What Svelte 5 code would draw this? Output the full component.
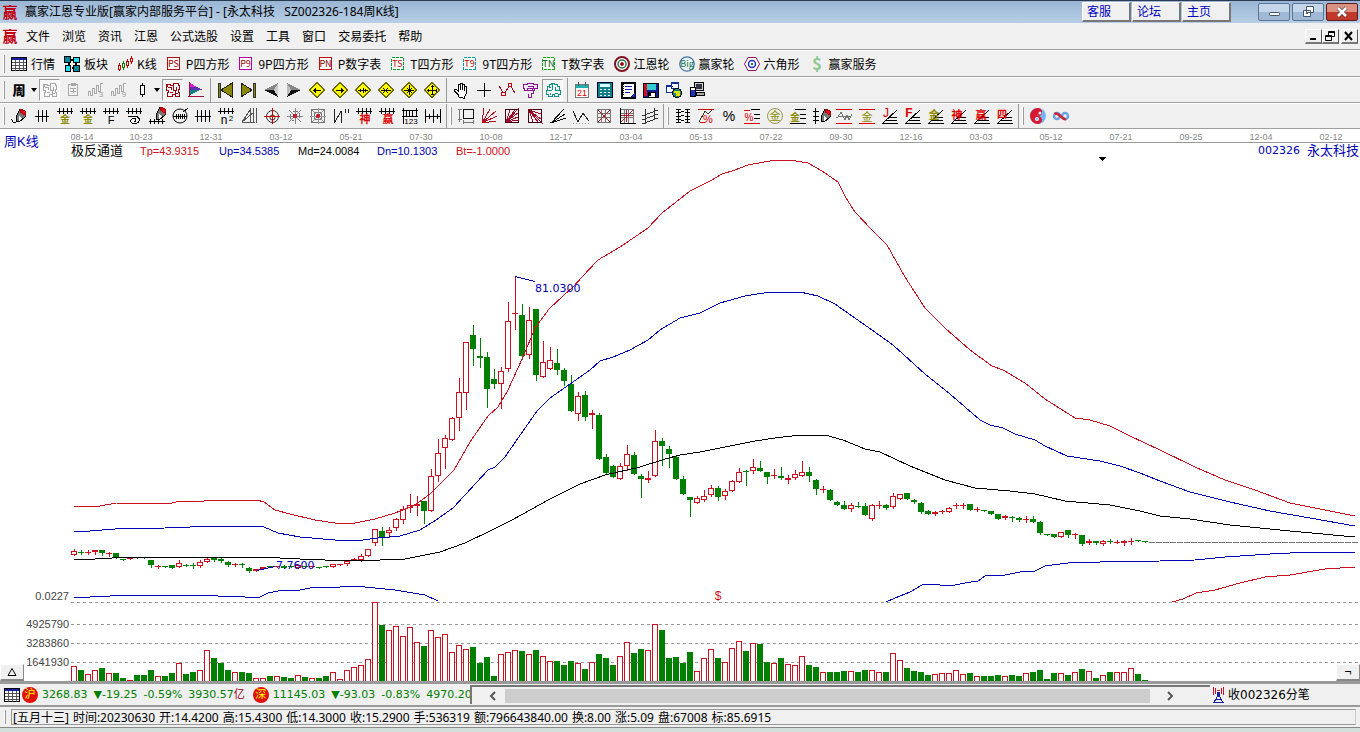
<script>
    const RED = '#cc1020';
    const GREEN = '#007f00';
    const BLUE = '#0000b4';

    const menus = ['文件', '浏览', '资讯', '江恩', '公式选股', '设置', '工具', '窗口', '交易委托', '帮助'];
    const siteLinks = ['客服', '论坛', '主页'];

    // icon helpers
    const t = (x, y, size, color, label, weight = 400) =>
        `<text x="${x}" y="${y}" font-size="${size}" font-weight="${weight}" fill="${color}" stroke="none" text-anchor="middle">${label}</text>`;
    const badge = (frame, color, label) =>
        `<rect x="1.5" y="1.5" width="12" height="12" fill="#fff" stroke="${frame}" ${frame[1] === '0' ? 'stroke-dasharray="3 1"' : ''}/>${t(7.5, 11, 9, color, label)}`;
    const diamond = (d) =>
        `<path d="M8 .5 15.5 8 8 15.5 .5 8Z" fill="#ff0" stroke="#6b6b00"/><path d="${d}" stroke="#000"/>`;
    const comb = '<path d="M0 3.5h16M2.5 0v6M6.5 0v6M10.5 0v6M14.5 0v6" stroke="#000"/>';
    const rays = '<path d="M0 15.5h16M3 12.5h12M6 9.5h9M1 15 15 2" stroke="#000"/>';
    const pen = '<path d="M6 7 9 1l5 2v6l-6 5-3-1z" fill="#777" stroke="#000"/><path d="M9 1l5 2v4l-5-3z" fill="#e01020" stroke="#a00"/><path d="M8 8l3 2-3 3z" fill="#fff" stroke="none"/>';
    const star = 'M0 8h16M8 0v16M2 2l12 12M14 2 2 14';
    const cloud = 'M1.5 2.5h4v1h3v-2h5v2h1v4h-1v3h1v4h-4v-2h-3v2h-5v-4h1v-2h-2v-4h1zM3 5.5h3v2M8.5 4v4h3V5M5 10.5h3M10.5 9v2h2';
    const steps = '<path d="M.5 14V9.5h2v4h2v-7h2v5h2v-8h2v6h2v-8h2" stroke="#a8a8a8"/>';

    const icons = {
        table: '<rect x=".5" y="1.5" width="15" height="13" fill="#fff" stroke="#000"/><path d="M1 3h14" stroke="#1020a0" stroke-width="2"/><path d="M1 6.5h14M1 9.5h14M1 12.5h14M4.5 4v11M8.5 4v11M12.5 4v11" stroke="#555"/>',
        blocks: '<g stroke="#000"><path d="M6 4h4M12 6v4M5 7v4M8 12h3" stroke-width="2"/><rect x=".5" y=".5" width="6" height="6" fill="#089"/><rect x="9.5" y="1.5" width="6" height="5" fill="#2de"/><rect x="1.5" y="9.5" width="5" height="6" fill="#2de"/><rect x="9.5" y="9.5" width="6" height="6" fill="#089"/></g>',
        kline: '<path d="M2.5 7v8M10.5 3v9M14.5 0v8" stroke="#c00"/><path d="M6.5 5v9" stroke="#080"/><g fill="#fff"><rect x="1.5" y="9.5" width="2" height="4" stroke="#c00"/><rect x="5.5" y="7.5" width="2" height="4" stroke="#080"/><rect x="9.5" y="5.5" width="2" height="4" stroke="#c00"/><rect x="13.5" y="2.5" width="2" height="3" stroke="#c00"/></g>',
        ps: badge('#b01010', '#900', 'PS'),
        p9: badge('#b000b0', '#900', 'P9'),
        pn: badge('#c01010', '#700', 'PN'),
        ts: badge('#00a030', '#b00', 'TS'),
        t9: badge('#00a0a0', '#b00', 'T9'),
        tn: badge('#00b000', '#050', 'TN'),
        wheel: '<g shape-rendering="auto"><circle cx="8" cy="8" r="7" fill="#fff" stroke="#801020" stroke-width="2"/><circle cx="8" cy="8" r="4" stroke="#287850" stroke-width="1.5"/><circle cx="8" cy="8" r="1.5" fill="#a01020" stroke="#a01020"/></g>',
        big: `<g shape-rendering="auto"><circle cx="8" cy="8" r="7.2" fill="#e8f4f4" stroke="#4870a0" stroke-width="1.3"/></g>${t(8, 11, 9, '#187850', 'Big')}`,
        hex: '<g shape-rendering="auto"><path d="M4 1.5h8L15.5 8 12 14.5H4L.5 8Z" fill="#fff" stroke="#901060"/><circle cx="8" cy="8" r="3.5" stroke="#2030c0" stroke-width="1.5"/><circle cx="8" cy="8" r="1.2" fill="#187850" stroke="none"/></g>',
        dollar: t(8, 14, 17, '#8cc890', '$', 700),
        week: t(8, 13, 13, '#000', '周', 900),
        cloud: `<path d="${cloud}" stroke="#a8a8a8"/>`,
        clip: '<path d="M3.5 2.5h9v11h-9zM6 1.5h4v2H6zM5 6.5h6M5 9.5h6M8.5 6v5" stroke="#a8a8a8"/>',
        m3: steps + t(13, 15, 8, '#999', '3'),
        m9: steps + t(13, 15, 8, '#999', '9'),
        candle: '<path d="M8.5 1v14" stroke="#000"/><rect x="6.5" y="3.5" width="4" height="9" fill="#fff" stroke="#000"/>',
        redcloud: `<path d="${cloud}" stroke="#a00010"/>`,
        flag: '<path d="M1.5 0v15M0 14.5h16" stroke="#a01040"/><path d="M2 1l7 4H2z" fill="#e020d0" stroke="none"/><path d="M2 5h7l6 3H2z" fill="#6030b0" stroke="none"/><path d="M2 8h10l-10 5z" fill="#108080" stroke="none"/>',
        first: '<path d="M1 1h2v14H1z" fill="#8a8a00" stroke="#333"/><path d="M15 1v14L4 8z" fill="#8a8a00" stroke="#222"/>',
        last: '<path d="M13 1h2v14h-2z" fill="#8a8a00" stroke="#333"/><path d="M1 1v14l11-7z" fill="#8a8a00" stroke="#222"/>',
        prev: '<path d="M15 1v14l-4-7z" fill="#ccc" stroke="none"/><path d="M1 8 15 1l-4 7z" fill="#888" stroke="none"/><path d="M1 8h10l4 7z" fill="#111" stroke="none"/>',
        next: '<path d="M1 1v14l4-7z" fill="#bbb" stroke="none"/><path d="M15 8 1 1l4 7z" fill="#888" stroke="none"/><path d="M15 8H5l-4 7z" fill="#111" stroke="none"/>',
        dLeft: diamond('M4 8.5h8M6.5 6v5M5.5 7v3'),
        dRight: diamond('M4 8.5h8M9.5 6v5M10.5 7v3'),
        dWide: diamond('M3 8.5h10M5.5 7v3M10.5 7v3M8 6v5'),
        dNarrow: diamond('M3 8.5h10M5 6l5 5M10 6l-5 5'),
        dStar: diamond('M3 8.5h10M8.5 3v10M6 6l5 5M11 6l-5 5'),
        dTall: diamond('M3 8.5h10M8.5 3v10M7 4.5h3M7 12.5h3M4.5 7v3M12.5 7v3'),
        hand: '<path d="M5.5 15v-2L1.5 9V7.5h2l2 2v-7h2v5-6h2v6-5h2v6-4h2v7l-2 3v2z" fill="#fff" stroke="#000"/>',
        plus: '<path d="M8.5 1v14M1 8.5h14" stroke="#000"/>',
        nodes: '<path d="M0 4l5 8 6-9 5 8" stroke="#a01020"/><circle cx="4.5" cy="12" r="2" fill="#fff" stroke="#c00010"/><circle cx="11" cy="3" r="2" fill="#fff" stroke="#c00010"/>',
        purple: '<path d="M1.5 2.5h4v-1h6v1h4v4h-3v2h-2v-2h-5v2h-3v-2h-1zM5.5 8.5h6v3h-2v4h-3v-4M6 4.5h5v2" stroke="#90109a"/>',
        brain: '<path d="M4.5 2.5h2v-1h3v1h3v2h2v4h1v4h-2v2h-4v-2h-2v2h-4v-2h-2v-4h1v-4h2zM7.5 2v6M3 8.5h4M10.5 5v3h3M5.5 11v2M10 11.5h3M4 5.5h2" stroke="#10908a"/>',
        calendar: `<rect x="1.5" y="2.5" width="13" height="13" fill="#fff" stroke="#777"/><path d="M2 4.5h12" stroke="#20b0b0" stroke-width="3"/><path d="M4.5 0v4M11.5 0v4" stroke="#555"/>${t(8, 14, 9, '#d00', '21')}`,
        calc: '<rect x=".5" y=".5" width="15" height="15" fill="#108088" stroke="#003"/><rect x="3" y="2" width="10" height="3" fill="#dff" stroke="none"/><path d="M3 7.5h10M3 10.5h10M3 13.5h10" stroke="#fff" stroke-dasharray="2 2"/>',
        note: '<rect x="1.5" y=".5" width="13" height="15" fill="#fff" stroke="#000" stroke-width="2"/><path d="M5 4.5h7M5 7.5h7M5 10.5h5" stroke="#1020b0"/><path d="M3.5 2v12" stroke="#000" stroke-dasharray="1 1"/><path d="M10 15l5-5v5z" fill="#1020b0" stroke="none"/>',
        floppy: '<path d="M.5 1.5h15v14H.5z" fill="#102090" stroke="#000"/><path d="M4 2h9v6H4z" fill="#3cc" stroke="none"/><path d="M1 2h3v12H1z" fill="#d01020" stroke="none"/><path d="M5 10h7v5H5z" fill="#fff" stroke="#000"/><path d="M6 11h2v3H6z" fill="#000" stroke="none"/>',
        net: '<rect x=".5" y="3.5" width="7" height="7" fill="#fff" stroke="#103090"/><rect x="5.5" y=".5" width="7" height="6" fill="#fff" stroke="#103090"/><path d="M1 4.5h6M6 1.5h6" stroke="#103090"/><circle cx="11" cy="11" r="4.5" fill="#188" stroke="#000"/><path d="M8 10h3v3h2v-4" stroke="#dd0" stroke-width="2"/>',
        pc: '<rect x="5.5" y=".5" width="9" height="8" fill="#ccc" stroke="#000"/><rect x="7" y="2" width="6" height="5" fill="#334" stroke="none"/><path d="M7.500 10.5h8v3h-8z" fill="#aaa" stroke="#000"/><rect x="1.5" y="5.5" width="5" height="9" fill="#fff" stroke="#000"/><path d="M2 8h4v6H2z" fill="#2030c0" stroke="none"/>',
        pen: `<g>${pen}<path d="M0 11c2 0 1 4 3 4l4-2" stroke="#000"/></g>`,
        hash: '<path d="M1 8.5h14M4.5 2v12M8.5 2v12M12.5 2v12" stroke="#000"/>',
        combGold: comb + t(8, 15, 10, '#8c8c00', '金', 700),
        combF: comb + t(8, 16, 11, '#000', 'F'),
        combSpiral: comb + '<path d="M2 8.5h8c5 1 4 7-1 7-6 0-5-5-1-5 3 0 2 3 0 3" stroke="#000"/>',
        penRuler: `<g transform="translate(2 -2)">${pen}</g><path d="M0 13.5h16M1.5 11v5M5.5 11v5M9.5 11v5M13.5 11v5" stroke="#000"/>`,
        circleRuler: '<g shape-rendering="auto"><circle cx="8" cy="8" r="7" stroke="#000"/></g><path d="M1 8.5h14M4.5 6v5M6.5 6v5M8.5 6v5M10.5 6v5M12.5 6v5M11 4l5-4" stroke="#000"/>',
        hash4: '<path d="M0 8.5h16M2.5 2v12M6.5 2v12M10.5 2v12M14.5 2v12" stroke="#000"/>',
        n2: comb + t(6, 16, 12, '#000', 'n') + t(13, 13, 8, '#000', '2'),
        wedge: '<path d="M1 14 9 2v12M1 14.5h13M1 14 13 4M12.5 0v15M15.5 0v15" stroke="#555"/>',
        target: '<g shape-rendering="auto"><circle cx="8.5" cy="8.5" r="6" stroke="#333"/><circle cx="8.500" cy="9.5" r="2.5" stroke="#333"/></g><path d="M0 8.5h16M8.5 0v16" stroke="#c00"/>',
        burst: `<path d="${star}" stroke="#888"/><circle cx="8" cy="8" r="5" stroke="#777" stroke-dasharray="2 1"/><circle cx="8" cy="8" r="2" fill="#c02030" stroke="#c02030"/>`,
        web: `<rect x="1.5" y="1.5" width="13" height="13" stroke="#777"/><rect x="4.5" y="4.5" width="7" height="7" stroke="#777"/><path d="${star}" stroke="#999"/><circle cx="8" cy="8" r="2" fill="#c02030" stroke="none"/>`,
        nMark: '<path d="M1.5 1v14L8 3v12M12.5 1v4M15.5 1v4" stroke="#222"/>',
        combShen: comb + t(9, 15, 11, '#d00', '神', 700),
        combYing: comb + t(9, 15, 11, '#d00', '赢', 700),
        ruler: `<path d="M0 2.5h16M0 8.5h16M1.5 0v16M14.5 0v9M4.5 3v5M7.5 3v5M10.5 3v5" stroke="#000"/>${t(9, 16, 8, '#000', '123')}`,
        spread: '<path d="M.5 1v14M8.5 1v14M15.5 1v14M1 8.5h14M4.5 6v5M12.5 6v5" stroke="#000"/>',
        boxAxis: '<rect x="5.5" y="1.5" width="10" height="9" stroke="#111"/><path d="M1.5 1v13M0 1.5h4M0 11.5h4M5 14.5h11M5.5 12v4M15.5 12v4" stroke="#777"/>',
        fanRed: '<path d="M1 15 3 0M1 15 9 1M1 15 15 3M1 15 16 8M1 15 15 13" stroke="#b01020"/><circle cx="2" cy="14" r="1.5" fill="#c00" stroke="none"/>',
        fanBox: '<rect x="1.5" y="1.5" width="13" height="13" stroke="#400010"/><path d="M2 14 6 2M2 14 11 2M2 14 14 5M2 14 14 9M2 14 15 12M2 14 15 0" stroke="#a00828"/>',
        fanBox2: '<rect x="1.5" y="1.5" width="13" height="13" stroke="#400010"/><path d="M2 2 6 14M2 2l9 12M2 2l12 9M2 2l12 4M2 2l14 14" stroke="#a00828"/><path d="M1 1h5L1 7z" fill="#700818" stroke="none"/>',
        fan: '<path d="M1 15 14 1M1 15 15 6M1 15 16 10M0 15l4-2" stroke="#111"/>',
        vee: '<path d="M0 3l5 11 5-9 6 8" stroke="#222"/><path d="M0 15.5h16" stroke="#999" stroke-dasharray="1 2"/>',
        gridRed: '<path d="M1.5 1v14M5.5 1v14M9.5 1v14M14.5 1v14M1 1.5h14M1 5.5h14M1 9.5h14M1 14.5h14" stroke="#777"/><path d="M2 2l12 12M14 2 2 14" stroke="#b02030"/>',
        gridRed2: '<path d="M5.5 1v14M9.5 1v14M14.5 1v14M1 1.5h14M1 5.5h14M1 9.5h14" stroke="#777"/><path d="M2 14 14 2M2 7.5h12M7.5 2v12" stroke="#b02030"/><path d="M1.5 0v15h15" stroke="#000"/>',
        slant: '<path d="M3.5 1v15M0 8l16-6M0 12l16-6M0 16l16-6M12.5 0v12" stroke="#333"/>',
        ladder: '<path d="M3.5 1v14M12.5 1v14M1 1.5h5M1 4.5h5M1 8.5h5M1 11.5h5M1 14.5h5M10 1.5h5M10 4.5h5M10 8.5h5M10 11.5h5M10 14.5h5M6 3.5h3M6 7.5h3M6 12.5h3" stroke="#000"/>',
        pctTrend: `<path d="M0 1.5h16M2 14.5h5" stroke="#d00"/><path d="M1 14 7 3l3 3 4-4" stroke="#333"/>${t(10, 15, 11, '#d00', '%')}`,
        pct: t(8, 13, 14, '#000', '%'),
        pctLines: `<path d="M7 1.5h9M10 6.5h6M10 10.5h6" stroke="#000"/><path d="M0 15.5h16M0 2.5h6" stroke="#d00"/>${t(5, 13, 10, '#d00', '%')}`,
        goldCircle: `<g shape-rendering="auto"><circle cx="8" cy="8" r="7.5" stroke="#99994c"/></g>${t(8, 12, 11, '#8c8c00', '金')}`,
        goldLines: `<path d="M5 1.5h11M10 6.5h6M10 10.5h6M0 15.5h16" stroke="#000"/>${t(5, 13, 10, '#8c8c00', '金', 700)}`,
        penLine: `<path d="M2.5 0v16M0 3.5h6M0 8.5h6M0 12.5h6" stroke="#000"/><g transform="translate(3 0)">${pen}</g>`,
        wave: '<path d="M0 1.5h16M0 15.5h16" stroke="#d00"/><path d="M0 9h2l3-5 4 8 2-5 2 5 3-6M3 8.5h12" stroke="#777"/>',
        goldBars: `<path d="M0 1.5h16M0 15.5h16" stroke="#d00"/>${t(8, 13, 11, '#8c8c00', '金')}`,
        rayJ: rays + t(4, 9, 12, '#d00', 'J'),
        rayF: rays + t(4, 9, 12, '#d00', 'F', 700),
        rayGold: rays + t(6, 11, 11, '#8c8c00', '金', 700),
        rayShen: rays + t(6, 11, 11, '#d00', '神', 700),
        rayYing: rays + t(7, 11, 11, '#d00', '赢', 700),
        raySi: rays + t(5, 10, 10, '#d00', '四', 700),
        yinyang: '<g shape-rendering="auto" stroke="none"><circle cx="8" cy="8" r="8" fill="#78b4f0"/><path d="M8 0a8 8 0 0 0 0 16c2 0 4-2 4-4s-2-4-4-4 4-8 0-8z" fill="#d81830"/><path d="M8 0a4 4 0 0 1 4 5c0 3-4 3-4 3z" fill="#d81830"/><circle cx="10" cy="5" r="1.5" fill="#fff"/><circle cx="7" cy="11" r="2" fill="#fff"/><circle cx="7" cy="11" r="1" fill="#78b4f0"/></g>',
        infinity: '<g shape-rendering="auto" stroke-width="2.5"><circle cx="4" cy="8" r="3" stroke="#6ca4dc"/><circle cx="12" cy="8" r="3" stroke="#6ca4dc"/><path d="M1.5 6C5 3 10 13 13 11" stroke="#d02038"/></g>',
        tower: '<path d="M8 8 4 15.5h9L9 8M6 12.5h5" stroke="#1020a0"/><path d="M8.5 5v5" stroke="#1020a0" stroke-width="3"/><path d="M5.5 1v6M3.5 0v8M11.5 1v6M13.5 0v8M7 3.500h3" stroke="#d01020"/>',
        logo: t(8, 14, 15, '#c00010', '赢', 700)
    };

    const views = [
        ['table', '行情'], ['blocks', '板块'], ['kline', 'K线'], ['ps', 'P四方形'], ['p9', '9P四方形'],
        ['pn', 'P数字表'], ['ts', 'T四方形'], ['t9', '9T四方形'], ['tn', 'T数字表'], ['wheel', '江恩轮'],
        ['big', '赢家轮'], ['hex', '六角形'], ['dollar', '赢家服务']
    ];
    const pressed = ['cloud', 'redcloud', 'brain'];
    const withDrop = ['week', 'candle'];
    const navGroups = [
        'week cloud clip m3 m9 candle redcloud flag',
        'first last prev next dLeft dRight dWide dNarrow dStar dTall',
        'hand plus nodes purple brain',
        'calendar calc note floppy net pc'
    ].map(g => g.split(' '));
    const drawGroups = [
        'pen hash combGold combGold combF combSpiral penRuler circleRuler hash4 n2 wedge target burst web nMark combShen combYing ruler spread',
        'boxAxis fanRed fanBox fanBox2 fan vee gridRed gridRed2 slant',
        'ladder pctTrend pct pctLines goldCircle goldLines penLine wave goldBars rayJ rayF rayGold rayShen rayYing raySi',
        'yinyang infinity'
    ].map(g => g.split(' '));

    const dates = ['08-14', '10-23', '12-31', '03-12', '05-21', '07-30', '10-08', '12-17', '03-04', '05-13', '07-22', '09-30', '12-16', '03-03', '05-12', '07-21', '09-25', '12-04', '02-12'];
    const channel = [
        ['Tp=43.9315', 'red'], ['Up=34.5385', 'blue'], ['Md=24.0084', 'black'], ['Dn=10.1303', 'blue'], ['Bt=-1.0000', 'red']
    ];

    // one entry per week: colour, high, body top, body bottom, low, volume top
    const candles = `r 549 551 555 555 666,g 550 552 553 554 670,r 550 552 553 554 674,r 550 550 552 554 670,g 550 550 553 555 668,r 552 553 554 556 673,g 553 553 558 558 673,
g 559 559 560 560 678,r 558 558 559 559 680,g 557 557 558 558 675,g 557 557 558 558 675,g 560 560 565 567 670,r 565 566 567 568 676,g 566 566 567 567 676,g 565 565 568 568 673,
r 560 563 567 567 663,g 564 565 566 566 674,g 563 565 566 568 672,r 560 562 566 567 670,r 557 559 562 562 650,g 558 558 560 561 658,g 557 559 561 562 663,g 561 562 565 566 670,
r 563 564 565 566 672,g 563 564 565 567 672,g 567 568 571 572 673,r 569 569 571 571 678,r 567 567 569 569 678,g 566 566 567 567 676,r 566 566 567 567 676,g 565 566 568 568 677,
g 566 566 567 567 678,r 565 565 568 568 675,g 566 566 567 567 677,r 566 566 567 567 678,g 567 567 568 568 678,g 566 566 567 567 676,r 564 564 567 567 672,r 564 564 565 565 679,
r 560 561 564 565 670,r 558 559 560 560 667,r 554 556 560 561 665,r 549 549 556 556 659,r 529 529 543 545 602,g 527 531 537 545 625,r 527 530 533 537 630,r 518 519 528 530 626,
r 506 509 520 523 636,r 494 505 508 512 627,r 496 504 506 515 642,g 501 501 511 523 646,r 469 476 511 511 630,r 439 453 476 481 637,r 435 438 448 468 634,r 417 418 440 440 652,
r 378 392 418 430 645,r 342 342 393 409 649,g 325 335 349 365 647,g 338 356 358 367 663,g 352 357 389 407 657,g 369 379 384 388 676,r 367 371 384 408 654,r 302 321 369 371 652,
r 276 313 314 329 650,g 304 315 356 359 651,r 307 320 355 358 654,g 309 309 375 380 650,r 341 362 377 377 656,r 347 360 369 369 661,g 349 363 370 374 661,g 368 370 381 385 665,
g 375 384 411 411 661,r 392 396 414 420 663,g 391 395 417 420 669,r 410 413 415 428 662,g 413 415 459 459 654,g 454 457 473 473 658,g 465 466 477 477 665,r 463 466 479 479 656,
r 445 454 466 470 642,g 452 455 474 474 653,g 474 476 479 497 649,r 471 478 480 482 650,r 430 441 476 476 624,g 438 441 446 465 630,g 446 449 454 467 658,g 455 457 479 479 657,
g 476 479 494 494 663,g 497 497 500 516 652,r 496 498 503 503 671,r 490 496 500 501 658,r 485 488 495 496 649,g 486 488 497 500 658,r 489 491 496 499 662,r 480 481 491 491 648,
r 468 472 482 482 641,g 470 471 472 485 651,r 459 467 471 473 643,g 461 468 471 471 644,g 472 472 477 483 662,r 469 475 476 478 663,g 467 476 478 479 658,r 475 478 480 483 664,
r 470 474 478 479 665,r 461 472 476 476 656,g 467 472 476 481 665,g 479 480 489 494 667,r 486 489 490 492 672,g 489 490 500 500 672,g 501 502 505 505 672,g 501 505 509 509 671,
r 503 505 509 511 671,g 502 506 507 507 672,g 503 506 515 515 670,r 504 505 519 520 670,r 501 505 506 508 672,g 504 505 508 509 672,r 493 496 507 508 653,r 494 494 499 499 660,
g 493 493 499 499 668,g 499 500 502 503 671,g 502 503 512 513 672,g 510 511 514 514 675,r 511 512 514 515 674,r 510 511 512 513 673,r 507 508 512 512 673,r 503 505 506 508 670,
r 503 505 506 508 674,g 504 504 510 510 673,r 507 509 510 511 676,g 510 510 511 511 676,g 511 511 514 514 676,g 514 514 519 519 675,r 515 516 518 519 676,g 516 517 518 521 675,
g 517 518 520 521 676,r 516 519 520 522 673,g 516 519 522 522 672,g 521 522 533 534 670,g 534 534 535 535 679,g 534 534 537 537 673,r 532 532 537 537 673,g 530 530 535 537 675,
r 533 534 535 538 672,g 535 535 544 545 669,r 539 541 543 544 671,g 541 541 543 544 678,r 540 541 544 545 675,g 539 541 542 543 672,r 540 542 543 543 672,r 540 541 543 545 672,
r 538 541 542 544 668,g 540 540 541 541 674,g 541 541 542 542 680`
        .replaceAll('\n', '')
        .split(',')
        .map((row, i) => {
            const [side, ...nums] = row.split(' ');
            const [high, top, bottom, low, volume] = nums.map(Number);
            return { x: 74 + i * 7, up: side === 'r', high, top, bottom, low, volume };
        });

    const bands = [
        [RED, '74,507 100,506 116,503 150,504 172,503 180,501 190,502 218,500 257,500 264,502 275,510 290,514 315,520 335,523 355,523 375,519 395,513 415,505 430,494 445,479 454,470 470,442 488,416 498,407 508,390 523,357 535,328 549,309 563,296 573,287 582,277 598,260 620,247 648,228 662,213 690,191 712,180 722,174 735,170 748,165 770,161 790,160 808,163 822,171 838,182 846,198 855,212 872,230 887,245 905,277 925,308 945,328 970,350 992,366 1003,370 1025,383 1045,399 1075,418 1090,420 1110,426 1130,436 1160,450 1195,467 1225,480 1255,490 1290,503 1325,510 1355,516'],
        [BLUE, '74,532 90,531 115,529 165,528 215,526 232,527 240,526 264,527 278,533 300,537 335,540 355,541 378,538 400,536 420,530 436,520 453,508 465,495 488,470 495,467 505,457 523,431 537,411 550,398 570,384 590,370 600,361 613,357 630,350 648,340 660,330 680,318 700,313 720,303 745,296 770,292 800,292 818,296 835,304 852,316 872,330 893,345 925,374 950,394 980,420 990,425 1003,428 1015,434 1035,440 1045,446 1067,456 1100,461 1120,466 1140,473 1160,481 1190,492 1230,502 1270,511 1310,518 1355,526'],
        ['#000', '74,560 95,559 130,557 260,557 300,559 325,560 380,560 405,559 440,552 465,543 490,531 512,520 550,499 580,484 605,475 640,467 665,459 680,455 700,452 725,447 755,441 775,438 800,435 825,435 843,440 865,449 880,452 910,466 945,480 975,488 1010,491 1035,494 1065,501 1110,505 1140,511 1160,516 1190,519 1230,525 1290,531 1355,537'],
        [BLUE, '74,597 90,597 130,595 175,595 180,596 190,595 245,597 260,597 268,593 278,591 300,590 310,588 340,587 355,586 375,588 395,590 425,595 438,601'],
        [BLUE, '886,602 895,598 910,592 922,585 930,584 950,586 965,583 978,581 985,576 1005,575 1025,571 1035,571 1045,566 1060,564 1076,562 1100,562 1160,561 1195,560 1225,557 1270,554 1310,552 1355,552'],
        [RED, '1172,602 1183,599 1196,593 1215,590 1240,583 1265,577 1290,575 1325,569 1355,567']
    ];
    const gridLines = [602, 624, 643, 662];
    const scale = [['0.0227', 600], ['4925790', 628], ['3283860', 647], ['1641930', 666]];

    const indexes = [
        { badge: '沪', values: ['3268.83', '▼-19.25', '-0.59%'], turnover: '3930.57' },
        { badge: '深', values: ['11145.03', '▼-93.03', '-0.83%'], turnover: '4970.20' }
    ];
    const status = ['[五月十三]', '时间:20230630', '开:14.4200', '高:15.4300', '低:14.3000', '收:15.2900', '手:536319', '额:796643840.00', '换:8.00', '涨:5.09', '盘:67008', '标:85.6915'];
</script>

{#snippet icon(name)}
    <svg class="icon" viewBox="0 0 16 16" aria-hidden="true">{@html icons[name]}</svg>
{/snippet}

<div class="app">
    <header class="titlebar">
        {@render icon('logo')}
        <h1>赢家江恩专业版[赢家内部服务平台] - [永太科技&nbsp;&nbsp; SZ002326-184周K线]</h1>
        <nav class="site-links">
            {#each siteLinks as link}
                <a href="#{link}">{link}</a>
            {/each}
        </nav>
        <div class="window-buttons">
            <button aria-label="最小化"><svg viewBox="0 0 30 16"><rect x="10.5" y="8.5" width="10" height="3" rx="1" fill="#fff" stroke="#456" /></svg></button>
            <button aria-label="还原"><svg viewBox="0 0 30 16"><path d="M13.5 2.5h7v6h-7zM10.5 6.5h7v6h-7z" fill="#fff" stroke="#456" /><path d="M13 9.5h2" stroke="#456" /></svg></button>
            <button class="close" aria-label="关闭"><svg viewBox="0 0 30 16"><path d="M11 4l8 8M19 4l-8 8" stroke="#644" stroke-width="4" /><path d="M11 4l8 8M19 4l-8 8" stroke="#fff" stroke-width="2.5" /></svg></button>
        </div>
    </header>

    <nav class="menubar">
        {@render icon('logo')}
        {#each menus as menu}
            <button class="menu">{menu}</button>
        {/each}
        <div class="mdi">
            <button aria-label="最小化"><svg viewBox="0 0 14 12"><path d="M4 9h6" stroke="#000" stroke-width="2" /></svg></button>
            <button aria-label="还原"><svg viewBox="0 0 14 12"><path d="M5.5 1.5h6v5h-6zM5 2.5h7M2.5 5.5h6v5h-6zM2 6.5h7" fill="none" stroke="#000" /></svg></button>
            <button class="apart" aria-label="关闭"><svg viewBox="0 0 14 12"><path d="M3 2l7 8M10 2l-7 8" stroke="#000" stroke-width="2" /></svg></button>
        </div>
    </nav>

    <div class="toolbar views">
        <span class="grip"></span>
        {#each views as [name, label]}
            <button class="view">{@render icon(name)}{label}</button>
        {/each}
    </div>

    <div class="toolbar">
        {#each navGroups as group, g}
            {#if g > 0}<span class="divider"></span>{:else}<span class="grip"></span>{/if}
            {#each group as name}
                <button class="tool" class:pressed={pressed.includes(name)} aria-label={name}>{@render icon(name)}</button>
                {#if withDrop.includes(name)}
                    <button class="drop" aria-label="{name} menu"><svg viewBox="0 0 6 4"><path d="M0 0h6L3 4z" /></svg></button>
                {/if}
            {/each}
        {/each}
    </div>

    <div class="toolbar">
        {#each drawGroups as group, g}
            {#if g > 0}<span class="group-end"></span>{/if}
            <span class="grip"></span>
            {#each group as name}
                <button class="tool" aria-label={name}>{@render icon(name)}</button>
            {/each}
        {/each}
    </div>

    <main class="chart">
        <div class="chart-head">
            <div class="period">周K线</div>
            <svg class="axis" viewBox="71 129 1289 14">
                {#each dates as date, i}
                    <text x={i === 0 ? 82 : 71 + i * 70} y="140">{date}</text>
                {/each}
                <path d="M71 142.5h1289" stroke="#999" />
            </svg>
            <div class="legend">
                <span class="indicator">极反通道</span>
                {#each channel as [text, tone]}
                    <span class="value {tone}">{text}</span>
                {/each}
                <span class="stock"><span class="code">002326</span>永太科技</span>
            </div>
        </div>

        <svg class="plot" viewBox="0 157 1360 524">
            {#each gridLines as y}
                <path d="M71 {y + 0.5}H1358" stroke="#999" stroke-dasharray="3 3" />
            {/each}
            {#each scale as [label, y]}
                <text class="scale" x="69" {y}>{label}</text>
            {/each}

            {#each candles as c}
                {#if c.up}
                    <rect x={c.x - 2.5} y={c.volume + 0.5} width="5" height={681 - c.volume} fill="#fff" stroke={RED} />
                {:else}
                    <rect x={c.x - 3} y={c.volume} width="6" height={681 - c.volume} fill={GREEN} />
                {/if}
                <path d="M{c.x + 0.5} {c.high}V{c.low + 1}" stroke={c.up ? RED : GREEN} />
                {#if c.up && c.bottom - c.top > 1}
                    <rect x={c.x - 2.5} y={c.top + 0.5} width="5" height={c.bottom - c.top - 1} fill="#fff" stroke={RED} />
                {:else}
                    <rect x={c.x - 3} y={c.top} width="6" height={c.bottom - c.top} fill={c.up ? RED : GREEN} />
                {/if}
            {/each}

            {#each bands as [color, points]}
                <polyline {points} fill="none" stroke={color} />
            {/each}
            <path d="M1149 542.5H1358" stroke="#777" stroke-dasharray="6 1" />

            <path d="M515 276.5l20 5M257 570.5l18-4" stroke={BLUE} />
            <text class="mark" x="535" y="292">81.0300</text>
            <text class="mark" x="276" y="569">7.7600</text>
            <text class="dividend" x="718" y="600">$</text>
            <path d="M1099 157h7l-3.5 4z" fill="#000" />
        </svg>

        <button class="corner left" aria-label="展开"><svg viewBox="0 0 10 8"><path d="M5 .5 9 7.5H1z" fill="none" stroke="#000" /></svg></button>
        <button class="corner right" aria-label="收起">¬</button>
    </main>

    <div class="ticker">
        <div class="quotes">
            {@render icon('table')}
            {#each indexes as index}
                <span class="market">{index.badge}</span>
                {#each index.values as value}
                    <span>{value}</span>
                {/each}
                <span class="turnover">{index.turnover}<i>亿</i></span>
            {/each}
        </div>
        <div class="scroller">
            <button aria-label="向左"><svg viewBox="0 0 8 10"><path d="M6 1 2 5l4 4" /></svg></button>
            <div class="thumb"></div>
            <button class="forward" aria-label="向右"><svg viewBox="0 0 8 10"><path d="M2 1l4 4-4 4" /></svg></button>
        </div>
        <div class="feed">{@render icon('tower')}收002326分笔</div>
    </div>

    <footer class="status">
        <span class="grip"></span>
        <p>
            {#each status as field}
                <span>{field}</span>
            {/each}
        </p>
    </footer>
</div>

<style>
    :global(body) { background: #d3dfdb; }
    .app { background: #f0f0f0; color: #000; font-family: "Liberation Sans", "Noto Sans CJK SC", sans-serif; font-size: 12px; line-height: 16px; overflow: hidden; }
    button { margin: 0; padding: 0; border: 0; background: none; color: inherit; font: inherit; }
    svg { display: block; }
    .icon { width: 16px; height: 16px; flex: none; fill: none; shape-rendering: crispEdges; overflow: visible; }

    .titlebar { display: flex; align-items: center; height: 23px; box-sizing: border-box; padding: 0 2px; border-top: 1px solid #2a3a50; background: linear-gradient(#9ab6d4, #b8cee6); }
    .titlebar h1 { flex: 1; margin: 0 0 0 7px; font-family: "Noto Sans", "Noto Sans CJK SC", sans-serif; font-size: 12px; font-weight: 400; white-space: nowrap; }
    .site-links { display: flex; gap: 1px; margin-right: 27px; }
    .site-links a { width: 49px; height: 20px; box-sizing: border-box; padding: 1px 4px; background: #f0f0f0; border: 1px solid #fff; border-right: 2px solid #777; border-bottom: 2px solid #777; color: #0000c0; text-decoration: none; }
    .window-buttons { display: flex; gap: 2px; }
    .window-buttons button { width: 32px; height: 18px; box-sizing: border-box; border: 1px solid #5b7590; border-radius: 2px; background: linear-gradient(#c4d6ea 50%, #9fb9d6 50%); }
    .window-buttons .close { border-color: #5c1a18; background: linear-gradient(#dc9080 50%, #c0392b 50%); }

    .menubar { display: flex; align-items: center; height: 26px; box-sizing: content-box; padding: 0 2px; border-bottom: 1px solid #a0a0a0; }
    .menu { margin-right: 12px; padding-top: 2px; white-space: nowrap; }
    .menubar .icon { margin-right: 8px; }
    .mdi { display: flex; margin-left: auto; }
    .mdi button { width: 17px; height: 15px; box-sizing: border-box; border: 1px solid #fff; border-right-color: #555; border-bottom: 2px solid #777; }
    .mdi svg { width: 14px; height: 12px; }
    .mdi .apart { margin-left: 2px; }

    .toolbar { display: flex; align-items: center; height: 26px; box-sizing: border-box; border-top: 1px solid #fff; border-bottom: 1px solid #a0a0a0; }
    .views { height: 27px; }
    .grip { width: 1px; height: 18px; margin: 0 2px 0 4px; flex: none; background: #999; box-shadow: -1px 0 #fff; }
    .views .grip { margin-right: 6px; }
    .view { display: flex; align-items: center; gap: 4px; margin-right: 9px; font-family: "Noto Sans CJK SC", sans-serif; white-space: nowrap; }
    .tool { display: flex; align-items: center; justify-content: center; width: 23px; height: 22px; flex: none; }
    .tool.pressed { width: 21px; margin: 0 1px; box-sizing: border-box; background: #f8f8f8; border: 1px solid #999; border-right-color: #fff; border-bottom-color: #fff; }
    .drop { width: 8px; flex: none; }
    .drop svg { width: 6px; height: 4px; margin: 0 auto; }
    .divider { width: 1px; height: 24px; margin: 0 2px 0 3px; flex: none; background: #999; }
    .group-end { width: 1px; height: 24px; margin-left: 2px; flex: none; background: #999; }

    .chart { position: relative; background: #fff; border-bottom: 3px solid #9a9a9a; }
    .chart-head { display: grid; grid-template-columns: 71px 1fr; grid-template-rows: auto 14px; }
    .period { grid-row: span 2; padding: 4px; color: #0000b4; font-size: 13px; line-height: 18px; }
    .axis { width: 100%; }
    .axis text { font-size: 9px; fill: #888; text-anchor: middle; }
    .legend { display: flex; font-size: 11px; line-height: 16px; white-space: nowrap; }
    .indicator { width: 69px; font-size: 13px; }
    .value { width: 79px; }
    .red { color: #cc1020; }
    .blue { color: #0000b4; }
    .stock { display: flex; gap: 7px; margin-left: auto; padding-right: 1px; color: #0000b4; font-size: 13px; }
    .code { font-family: "DejaVu Sans", sans-serif; font-size: 11px; }
    .plot { width: 100%; shape-rendering: crispEdges; }
    .scale { font-size: 11px; fill: #444; text-anchor: end; }
    .mark { font-family: "DejaVu Sans", sans-serif; font-size: 11px; fill: #0000b4; }
    .dividend { font-size: 12px; fill: #cc1020; text-anchor: middle; }
    .corner { position: absolute; bottom: 0; width: 24px; height: 17px; background: #f0f0f0; border: 1px solid #fff; border-right-color: #888; border-bottom: 2px solid #888; line-height: 14px; }
    .corner svg { width: 10px; height: 8px; margin: 0 auto; }
    .corner.left { left: 0; }
    .corner.right { right: 0; }

    .ticker { display: flex; align-items: center; height: 21px; border-bottom: 2px solid #9a9a9a; font-family: "DejaVu Sans", "Noto Sans CJK SC", sans-serif; white-space: nowrap; }
    .quotes { display: flex; align-items: center; gap: 6px; width: 466px; padding-left: 4px; flex: none; overflow: hidden; color: #007f00; font-size: 11px; }
    .quotes i { font-style: normal; color: #900010; }
    .market { width: 16px; height: 16px; margin: 0 -2px 0 -4px; flex: none; border-radius: 50%; background: #e01010; color: #ff0; text-align: center; }
    .turnover { margin-right: 6px; }
    .scroller { display: flex; align-items: center; flex: 1; height: 17px; border-top: 2px solid #777; border-left: 2px solid #777; }
    .scroller button { width: 33px; flex: none; }
    .scroller .forward { width: 60px; padding-left: 16px; box-sizing: border-box; }
    .scroller svg { width: 8px; height: 10px; margin-left: 17px; fill: none; stroke: #555; stroke-width: 2; }
    .scroller .forward svg { margin-left: 0; }
    .thumb { flex: 1; height: 14px; background: #cdcdcd; }
    .feed { display: flex; align-items: center; gap: 2px; width: 150px; flex: none; font-size: 12px; }

    .status { display: flex; align-items: center; height: 20px; border-bottom: 1px solid #888; }
    .status .grip { height: 14px; margin: 0 5px; }
    .status p { display: flex; gap: 4px; flex: 1; height: 16px; margin: 0 4px 0 0; padding-left: 1px; border: 1px solid #999; border-right-color: #ccc; box-sizing: border-box; font-family: "Noto Sans", "Noto Sans CJK SC", sans-serif; line-height: 15px; white-space: nowrap; overflow: hidden; }
</style>
